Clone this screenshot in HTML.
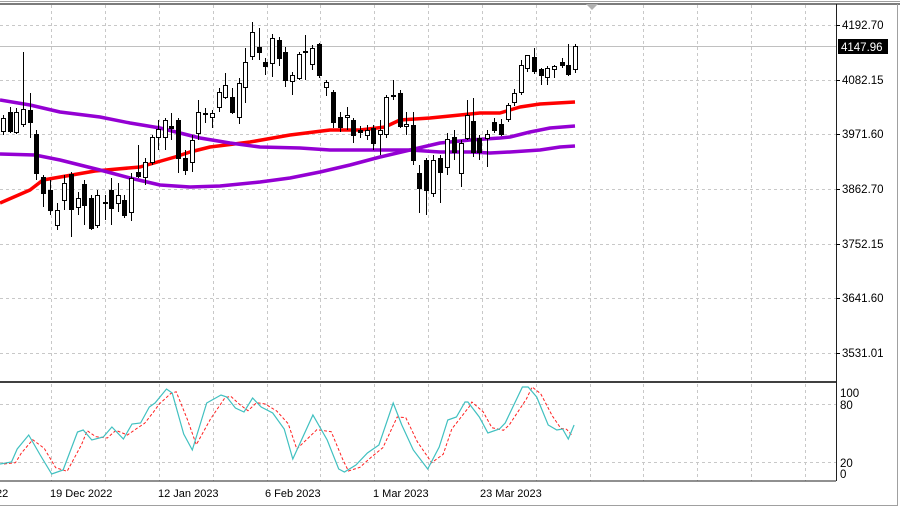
<!DOCTYPE html>
<html><head><meta charset="utf-8"><style>
html,body{margin:0;padding:0;background:#fff;}
svg{display:block;font-family:"Liberation Sans",sans-serif;}
</style></head><body>
<svg id="s" width="900" height="508" xmlns="http://www.w3.org/2000/svg">
<rect width="900" height="508" fill="#fff"/>
<g id="grid" stroke="#c8c8c8" stroke-dasharray="3,3" stroke-width="1"></g>
<line x1="0" y1="46.5" x2="836" y2="46.5" stroke="#c0c0c0"/>
<polyline fill="none" stroke="#ff0000" stroke-width="3.5" stroke-linejoin="round" points="0,203 30,190 43,180 95,171 140,167 175,157 190,152 210,147 250,142 290,135 330,130 360,130 385,127 400,120 430,118 460,115 480,113 500,113 520,107 540,104 575,102"/>
<polyline fill="none" stroke="#9400d3" stroke-width="3.5" stroke-linejoin="round" points="0,100 30,105 60,112 100,117 130,123 160,128 180,133 200,138 230,143 260,147 300,148 330,150 380,150 410,150 440,152 470,152 490,153 510,152 540,150 560,147 575,146"/>
<polyline fill="none" stroke="#9400d3" stroke-width="3.5" stroke-linejoin="round" points="0,154 35,155 60,160 100,170 130,178 160,185 190,187 220,186 260,182 290,178 320,172 350,165 380,157 410,150 440,143 470,140 500,138 510,137 530,132 550,128 575,126"/>
<g id="c"></g>
<polyline id="red" fill="none" stroke="#ff2020" stroke-width="1" stroke-dasharray="3,2"/>
<polyline id="cy" fill="none" stroke="#40c0c0" stroke-width="1.2"/>
<line x1="0" y1="1.5" x2="900" y2="1.5" stroke="#a0a0a0"/>
<line x1="0" y1="4" x2="900" y2="4" stroke="#505050" stroke-width="1.5"/>
<polygon points="586,4 598,4 592,10" fill="#b0b0b0"/>
<line x1="0" y1="382" x2="836" y2="382" stroke="#404040" stroke-width="2"/>
<line x1="0" y1="481" x2="836" y2="481" stroke="#202020"/>
<line x1="836.5" y1="4" x2="836.5" y2="481" stroke="#202020"/>
<line x1="897.5" y1="4" x2="897.5" y2="505" stroke="#a0a0a0"/>
<line x1="0" y1="505.5" x2="898" y2="505.5" stroke="#a0a0a0"/>
<g id="ax" font-size="11.5" fill="#000"></g>
<rect x="838" y="39" width="50" height="15" fill="#000"/>
<text x="841" y="51" font-size="11.5" fill="#fff">4147.96</text>
<g font-size="11" fill="#000">
<text x="-4" y="497">22</text>
<text x="50" y="497">19 Dec 2022</text>
<text x="158" y="497">12 Jan 2023</text>
<text x="265" y="497">6 Feb 2023</text>
<text x="373" y="497">1 Mar 2023</text>
<text x="480" y="497">23 Mar 2023</text>
</g>
</svg>
<script>
var NS="http://www.w3.org/2000/svg";
function el(p,t,a){var e=document.createElementNS(NS,t);for(var k in a)e.setAttribute(k,a[k]);p.appendChild(e);return e;}
var g=document.getElementById('grid');
var vx=[51,105,159,213,267,320,374,428,482,536,590,643,697,751,805];
vx.forEach(function(x){el(g,'line',{x1:x+.5,y1:5,x2:x+.5,y2:381});el(g,'line',{x1:x+.5,y1:384,x2:x+.5,y2:481});});
[25,80,134,189,244,298,353].forEach(function(y){el(g,'line',{x1:0,y1:y+.5,x2:836,y2:y+.5});});
[404,462].forEach(function(y){el(g,'line',{x1:0,y1:y+.5,x2:836,y2:y+.5});});
var ax=document.getElementById('ax');
[[25,'4192.70'],[80,'4082.15'],[134,'3971.60'],[189,'3862.70'],[244,'3752.15'],[298,'3641.60'],[353,'3531.01']].forEach(function(a){
 el(ax,'line',{x1:836,y1:a[0]+.5,x2:840,y2:a[0]+.5,stroke:'#000'});var t=el(ax,'text',{x:842,y:a[0]+4});t.textContent=a[1];});
[[393,'100'],[405,'80'],[463,'20'],[474,'0']].forEach(function(a){var t=el(ax,'text',{x:840,y:a[0]+4});t.textContent=a[1];});
var C=[[3,115,131,118,135],[10,107,112,131,133],[16,108,132,112,134],[23,52,124,109,127],[30,93,110,122,138],[36,130,134,173,180],[43,175,177,193,207],[50,180,190,210,215],[57,203,225,210,230],[64,175,200,183,210],[71,172,174,209,237],[78,192,207,198,215],[84,180,184,205,225],[91,195,198,228,230],[97,190,225,195,228],[105,195,202,203,220],[111,178,190,208,225],[118,183,203,195,212],[124,195,200,215,218],[131,173,212,178,221],[138,145,172,176,178],[145,158,177,162,185],[152,135,162,137,165],[158,120,137,129,150],[165,118,137,120,150],[171,113,126,128,140],[178,118,120,158,173],[185,150,158,170,175],[192,135,162,140,172],[198,100,133,112,140],[205,108,113,114,123],[212,110,117,113,128],[219,88,107,92,112],[225,73,97,85,99],[232,88,97,112,114],[239,78,117,83,124],[245,48,87,62,103],[252,22,56,32,60],[259,28,47,52,60],[265,58,62,66,75],[272,34,63,38,77],[279,37,40,58,66],[285,47,52,80,87],[292,72,81,75,95],[299,52,78,54,80],[305,35,51,52,80],[312,45,64,48,70],[319,43,44,75,78],[326,80,87,82,96],[333,90,92,122,128],[340,112,117,127,132],[347,107,117,115,130],[353,118,120,135,143],[360,126,130,132,138],[367,125,135,130,140],[373,125,128,143,150],[380,120,134,130,155],[386,95,134,97,138],[393,80,95,96,100],[400,90,93,126,128],[406,112,126,124,135],[413,112,125,160,165],[419,165,173,188,213],[426,158,160,190,215],[433,155,193,160,197],[440,155,158,172,203],[447,133,167,139,175],[454,130,137,152,160],[461,140,173,143,187],[467,100,138,115,140],[473,98,121,152,157],[479,135,138,152,160],[487,130,138,134,167],[494,118,122,130,133],[501,119,124,134,136],[508,103,119,105,122],[514,89,102,93,106],[521,60,92,65,95],[527,55,68,55,72],[534,48,57,71,74],[541,68,69,75,85],[547,66,77,68,85],[554,65,69,66,78],[562,58,62,65,68],[568,44,65,74,76],[575,44,69,46,73]];
var cg=document.getElementById('c');
C.forEach(function(c){var x=c[0];el(cg,'line',{x1:x+.5,y1:c[1],x2:x+.5,y2:c[4],stroke:'#000'});
 var top=Math.min(c[2],c[3]),h=Math.max(1,Math.abs(c[3]-c[2]));var white=c[3]<c[2];
 el(cg,'rect',{x:x-1.5,y:top+.5,width:4,height:h,fill:white?'#fff':'#000',stroke:'#000'});});
var P=[[0,464],[20,462],[30,449],[50,435],[70,455],[90,474],[110,470],[135,432],[145,430],[160,440],[180,437],[195,427],[215,439],[230,424],[245,423],[260,407],[270,403],[290,389],[300,393],[320,434],[335,450],[360,403],[385,395],[395,397],[410,408],[425,412],[440,398],[455,407],[475,413],[495,429],[510,459],[545,415],[570,440],[590,469],[600,472],[620,465],[640,453],[660,445],[685,403],[700,425],[720,450],[745,469],[765,447],[780,420],[795,417],[810,402],[815,402],[835,417],[850,433],[870,429],[880,423],[910,387],[920,387],[935,397],[955,425],[970,430],[980,429],[990,439],[1000,425]];
var pts=P.map(function(p){return [p[0]/1.742,p[1]];});
document.getElementById('cy').setAttribute('points',pts.map(function(p){return p[0].toFixed(1)+','+p[1];}).join(' '));
var rp=[];for(var i=0;i<pts.length;i++){var a=pts[Math.max(0,i-1)],b=pts[i];rp.push([b[0]+4,(a[1]+2*b[1])/3]);}
rp=rp.filter(function(p){return p[0]<=574;});
document.getElementById('red').setAttribute('points',rp.map(function(p){return p[0].toFixed(1)+','+p[1].toFixed(1);}).join(' '));
</script>
</body></html>
